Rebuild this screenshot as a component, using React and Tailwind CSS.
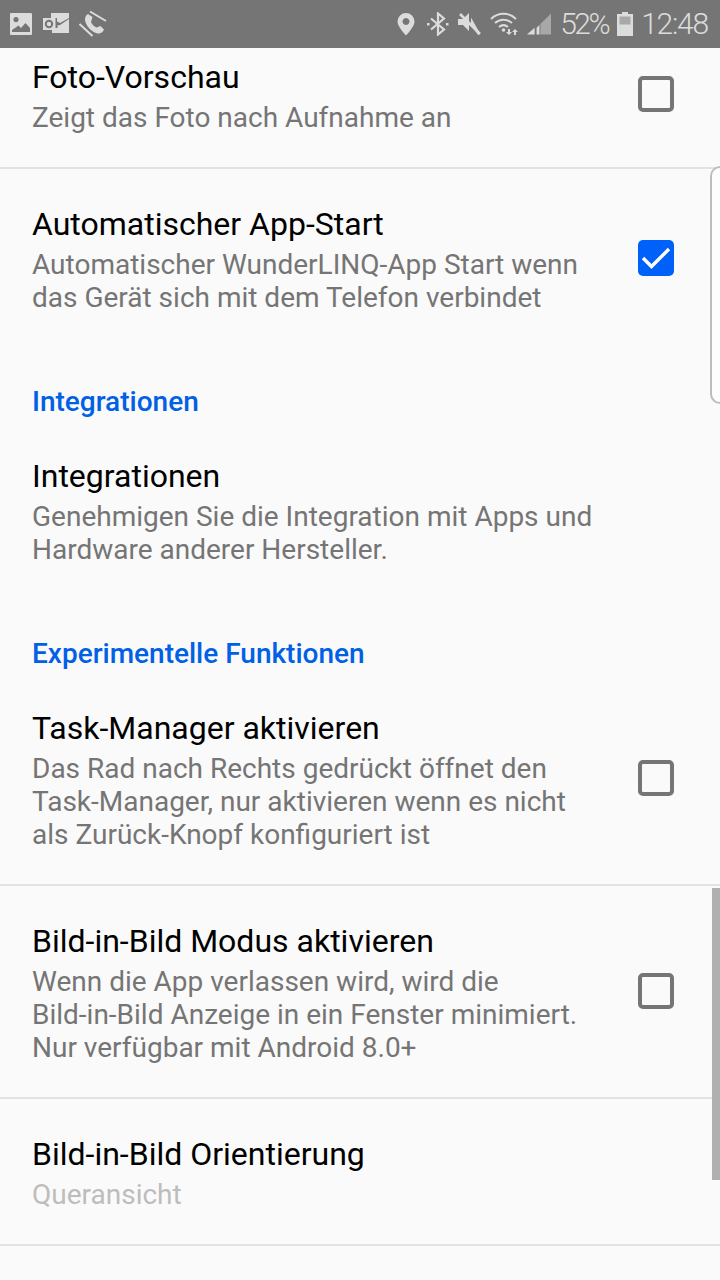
const Unchecked = () => (
  <div className="w-9 h-9 shrink-0 rounded-[5px] border-[4px] border-[#757575]" />
);
const Checked = () => (
  <div className="w-9 h-9 shrink-0 rounded-[5px] bg-[#0060fa] flex items-center justify-center">
    <svg width="36" height="36" viewBox="0 0 36 36" fill="none">
      <path d="M5 18l8.500 8.500L31 9" stroke="#fff" strokeWidth="3.400" />
    </svg>
  </div>
);

const Row = ({ title, lines, box, divider, pad, muted }) => (
  <div className={`flex items-center pl-8 pr-[46px] ${pad} ${divider ? "border-b-2 border-[#e2e2e2]" : ""}`}>
    <div className="flex-1 min-w-0">
      <div className="text-[32px] leading-[40px] text-black">{title}</div>
      <div className={`text-[28px] leading-[33px] mt-[4px] ${muted ? "text-[#bdbdbd]" : "text-[#757575]"}`}>
        {lines.map((l) => <div key={l} className="whitespace-nowrap">{l}</div>)}
      </div>
    </div>
    <div className="-mt-[3px]">{box}</div>
  </div>
);

const Header = ({ children, pad }) => (
  <div className={`pl-8 ${pad} text-[28px] leading-[38px] font-medium text-[#0060e6]`}>{children}</div>
);

const StatusBar = () => (
  <div className="h-12 bg-[#757575] flex items-center justify-between pl-[9px] pr-[12px] text-[#dcdcdc]">
    <div className="flex items-center gap-[10px]">
      <svg width="24" height="24" viewBox="0 0 24 24">
        <path fillRule="evenodd" fill="#dcdcdc" d="M2 1h20a1.500 1.500 0 0 1 1 1v20a1 1 0 0 1-1 1H2a1 1 0 0 1-1-1V2a1 1 0 0 1 1-1zM7 5a2.600 2.600 0 1 0 .01 0zM3 20h18v-4l-4.500-5-4.500 5-2.500-2.500L3 18z" />
      </svg>
      <svg width="28" height="22" viewBox="0 0 28 22">
        <path fill="#dcdcdc" d="M8 0h18v5l-9 5-3-1.500V5H8zM17 12l9-6v14H9v-5h5.500v-2.500zM0 5h12.500v12H0z" />
        <circle cx="6" cy="11" r="3.200" fill="none" stroke="#757575" strokeWidth="2" />
      </svg>
      <svg width="30" height="28" viewBox="0 0 30 28" className="-ml-[3px]">
        <path fill="none" stroke="#dcdcdc" strokeWidth="2" d="M12 1.500l16 9.500M1.500 14l13 12" />
        <path fill="#dcdcdc" d="M10 4l4.500 3-1.500 5c1 2.500 3 4.500 5.500 5.500l4-1.500 3.500 3.500c-1 3-4 4.500-6.500 4C14 22.500 7.500 15.500 7 10c-.2-2.500 1-5 3-6z" />
      </svg>
    </div>
    <div className="flex items-center">
      <svg width="18" height="24" viewBox="0 0 18 24" className="mr-[12px]">
        <path fillRule="evenodd" fill="#dcdcdc" d="M9 1a8.500 8.500 0 0 0-8.500 8.500C.5 15 9 23.500 9 23.500S17.500 15 17.500 9.500A8.500 8.500 0 0 0 9 1zm0 5a3.500 3.500 0 1 1-.01 0z" />
      </svg>
      <svg width="22" height="24" viewBox="0 0 22 24" className="mr-[9px]">
        <path fill="none" stroke="#dcdcdc" strokeWidth="2.200" d="M4 6.500l13 11-6 5V1.500l6 5-13 11" />
        <path fill="#dcdcdc" d="M0 11h2.500v2.500H0zM19 11h2.500v2.500H19z" />
      </svg>
      <svg width="24" height="24" viewBox="0 0 24 24" className="mr-[8px]">
        <path fill="#dcdcdc" d="M0 7h5l6-6v18l-6-6H0z" />
        <path fill="#dcdcdc" d="M13 5.500l9 16-2 1.500L13 12z" />
        <path fill="none" stroke="#dcdcdc" strokeWidth="2.600" d="M2 2l20 20" />
      </svg>
      <svg width="30" height="24" viewBox="0 0 30 24" className="mr-[6px]">
        <g fill="none" stroke="#dcdcdc" strokeWidth="2">
          <path d="M1 7c7-7 18-7 25 0" />
          <path d="M5 11c5-4.500 12-4.500 17 0" />
          <path d="M9 15c3-2.500 6-2.500 9 0" />
        </g>
        <circle cx="13.500" cy="18" r="1.800" fill="#dcdcdc" />
        <path fill="#dcdcdc" d="M18 17h2v3h2l-3 3-3-3h2zM26 23h-2v-3h-2l3-3 3 3h-2z" />
      </svg>
      <svg width="25" height="24" viewBox="0 0 26 24" className="mr-[9px]">
        <path fill="#a8a8a8" d="M26 1v22H15V12z" />
        <path fill="#dcdcdc" d="M1 23l8-7v7zM11 16l3-3v10h-3z" />
      </svg>
      <span className="text-[30px] leading-none font-light tracking-[-2.500px] mr-[9px]">52%</span>
      <svg width="16" height="24" viewBox="0 0 16 24" className="mr-[8px]">
        <path fill="#dcdcdc" d="M5 0h6v2h5v22H0V2h5z" />
        <path fill="#a8a8a8" d="M2.500 4.500h11v8h-11z" />
      </svg>
      <span className="text-[30px] leading-none font-light tracking-[-1.200px]">12:48</span>
    </div>
  </div>
);

export default function App() {
  return (
    <div className="relative w-[720px] h-[1280px] overflow-hidden bg-[#fafafa] font-['Roboto',sans-serif]">
      <StatusBar />
      <Row pad="pt-[9px] pb-[33px]" divider title="Foto-Vorschau" lines={["Zeigt das Foto nach Aufnahme an"]} box={<Unchecked />} />
      <Row pad="pt-[35px] pb-[35px]" title="Automatischer App-Start" lines={["Automatischer WunderLINQ-App Start wenn", "das Gerät sich mit dem Telefon verbindet"]} box={<Checked />} />
      <Header pad="pt-[34px]">Integrationen</Header>
      <Row pad="pt-[35px] pb-[34px]" title="Integrationen" lines={["Genehmigen Sie die Integration mit Apps und", "Hardware anderer Hersteller."]} />
      <Header pad="pt-[35px]">Experimentelle Funktionen</Header>
      <Row pad="pt-[35px] pb-[33px]" divider title="Task-Manager aktivieren" lines={["Das Rad nach Rechts gedrückt öffnet den", "Task-Manager, nur aktivieren wenn es nicht", "als Zurück-Knopf konfiguriert ist"]} box={<Unchecked />} />
      <Row pad="pt-[35px] pb-[33px]" divider title="Bild-in-Bild Modus aktivieren" lines={["Wenn die App verlassen wird, wird die", "Bild-in-Bild Anzeige in ein Fenster minimiert.", "Nur verfügbar mit Android 8.0+"]} box={<Unchecked />} />
      <Row pad="pt-[35px] pb-[33px]" divider muted title="Bild-in-Bild Orientierung" lines={["Queransicht"]} />
      <div className="absolute left-[710px] top-[166px] w-[14px] h-[238px] rounded-l-[10px] border-2 border-r-0 border-[#bdbdbd] bg-[#fdfdfd]" />
      <div className="absolute left-[712px] top-[888px] w-2 h-[292px] bg-[#b0b0b0]" />
    </div>
  );
}
